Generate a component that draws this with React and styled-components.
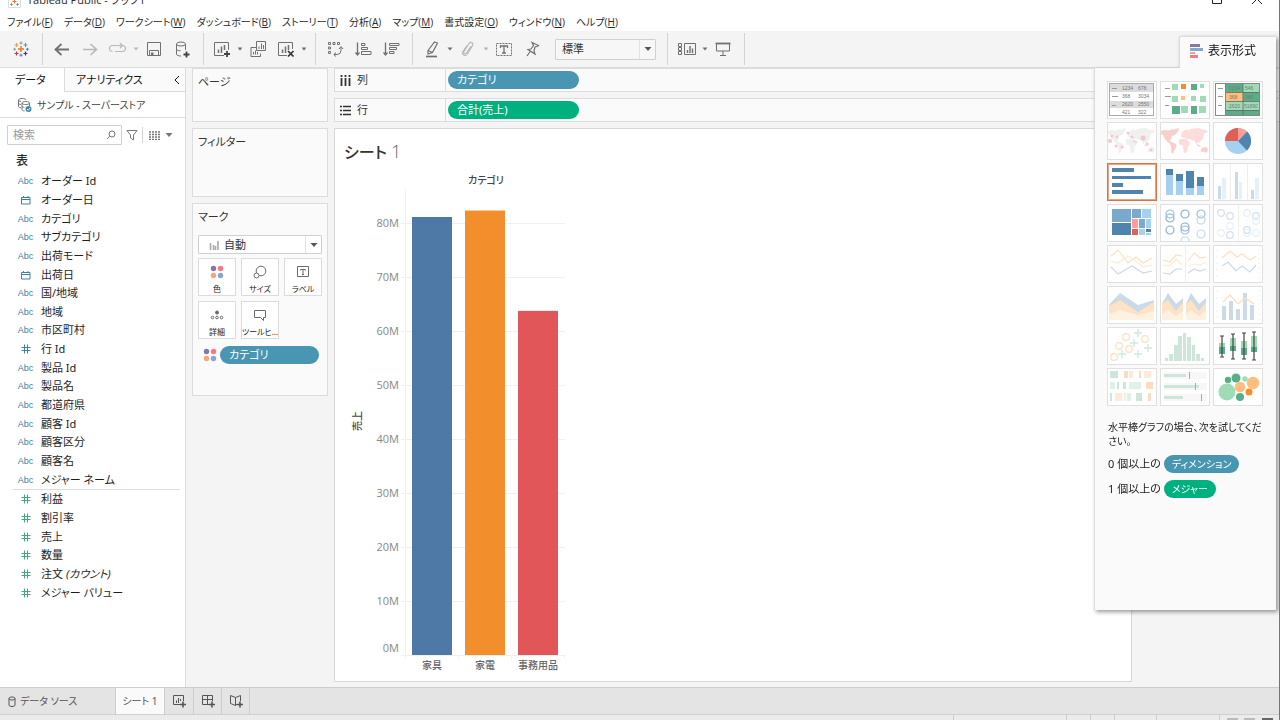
import React from 'react';
import styled, { createGlobalStyle } from 'styled-components';

const UI_FONT = '"Noto Sans", "Noto Sans CJK JP", sans-serif';
const MENU_FONT = '"Open Sans", "Noto Sans CJK JP", sans-serif';

const GlobalStyle = createGlobalStyle`
    * {
        box-sizing: border-box;
    }
    body {
        margin: 0;
        font-family: ${UI_FONT};
        font-size: 11px;
        line-height: 16px;
        color: #2b2b2b;
        font-feature-settings: "palt";
    }
    button, input, select {
        margin: 0;
        padding: 0;
        border: none;
        background: transparent;
        color: inherit;
        font: inherit;
        font-feature-settings: inherit;
    }
    svg {
        display: block;
        flex-shrink: 0;
    }
`

const Window = styled.div`
    height: 100vh;
    display: flex;
    flex-direction: column;
    overflow: hidden;
    background: #f4f4f4;
    border-right: 1px solid #757575;
    position: relative;
`

const TitleBar = styled.header`
    height: 8px;
    flex-shrink: 0;
    display: flex;
    align-items: flex-end;
    gap: 6px;
    padding: 0 16px 0 8px;
    overflow: hidden;
    background: #fff;
    font-family: ${MENU_FONT};
    font-size: 11px;
`
const WindowButton = styled.button`
    width: 12px;
    height: 12px;
    margin-left: ${({ $first }) => ($first ? 'auto' : '22px')};
    margin-bottom: 3px;
`

const MenuBar = styled.nav`
    height: 23px;
    flex-shrink: 0;
    display: flex;
    align-items: center;
    gap: 11px;
    padding: 4px 7px 0;
    background: #fff;
    font-family: ${MENU_FONT};
    font-size: 10px;
    white-space: nowrap;
`

const Toolbar = styled.div`
    height: 37px;
    flex-shrink: 0;
    display: flex;
    align-items: center;
    border-bottom: 1px solid #dcdcdc;
    color: #707070;
`
const ToolGroup = styled.div`
    height: 32px;
    display: flex;
    align-items: center;
    gap: 8px;
    padding: 0 11px 0 ${({ $pad }) => $pad || 9}px;
    border-right: 1px solid #d4d4d4;
`
const ToolButton = styled.button`
    width: 20px;
    height: 24px;
    display: flex;
    align-items: center;
    justify-content: center;
    opacity: ${({ disabled }) => (disabled ? 0.45 : 1)};
`
const CaretButton = styled(ToolButton)`
    width: 16px;
    margin: 0 -8px;
`

const SelectBox = styled.label`
    width: ${({ $wide }) => ($wide ? '124px' : '101px')};
    height: ${({ $wide }) => ($wide ? '19px' : '21px')};
    margin: ${({ $wide }) => ($wide ? '10px 0 0' : '0 0 0 5px')};
    padding-left: ${({ $wide }) => ($wide ? '10px' : '6px')};
    display: flex;
    align-items: center;
    gap: 5px;
    border: 1px solid #d0d0d0;
    border-radius: 1px;
    background: ${({ $wide }) => ($wide ? '#fff' : '#f7f7f7')};
    color: #333;
    select {
        flex: 1;
        min-width: 0;
        appearance: none;
        outline: none;
    }
    span {
        width: 16px;
        align-self: stretch;
        display: flex;
        align-items: center;
        justify-content: center;
        border-left: 1px solid #e2e2e2;
        color: #555;
    }
`

const Body = styled.main`
    flex: 1;
    min-height: 0;
    display: flex;
    gap: 6px;
`

const DataPane = styled.aside`
    width: 186px;
    flex-shrink: 0;
    background: #fff;
    border-right: 1px solid #dcdcdc;
`
const PaneTabs = styled.div`
    height: 24px;
    display: flex;
`
const PaneTab = styled.button`
    flex: ${({ $active }) => ($active ? '0 0 65px' : '1')};
    padding: 0 4px 0 ${({ $active }) => ($active ? '15px' : '11px')};
    display: flex;
    align-items: center;
    justify-content: space-between;
    border-right: ${({ $active }) => ($active ? '1px solid #dcdcdc' : 'none')};
    border-bottom: ${({ $active }) => ($active ? 'none' : '1px solid #dcdcdc')};
    background: ${({ $active }) => ($active ? '#fff' : '#fafafa')};
    color: #111;
`
const DataSource = styled.div`
    height: 26px;
    display: flex;
    align-items: center;
    gap: 5px;
    padding-left: 17px;
    border-bottom: 1px solid #dcdcdc;
    font-size: 10px;
    color: #444;
`
const SearchRow = styled.div`
    display: flex;
    align-items: center;
    gap: 1px;
    padding: 7px 7px 0;
    color: #777;
`
const SearchBox = styled.label`
    width: 115px;
    height: 20px;
    display: flex;
    align-items: center;
    padding: 0 5px;
    border: 1px solid #cfcfcf;
    border-radius: 1px;
    input {
        flex: 1;
        min-width: 0;
        outline: none;
    }
    input::placeholder {
        color: #999;
    }
`
const SmallButton = styled.button`
    height: 16px;
    padding: 0 3px;
    display: flex;
    align-items: center;
    & + & {
        border-left: 1px solid #d4d4d4;
        padding-left: 6px;
    }
`
const TableHeading = styled.h2`
    margin: 7px 0 2px 16px;
    font-size: 12px;
    line-height: 18px;
    font-weight: 500;
`
const FieldList = styled.ul`
    height: ${({ $height }) => $height}px;
    margin: 0 5px 0 13px;
    padding: 0;
    display: grid;
    grid-auto-rows: 1fr;
    list-style: none;
    border-bottom: ${({ $divided }) => ($divided ? '1px solid #dcdcdc' : 'none')};
`
const Field = styled.li`
    display: flex;
    align-items: center;
    gap: 3px;
    color: #1e1e1e;
`
const FieldType = styled.span`
    width: 25px;
    display: flex;
    justify-content: center;
    font-family: "Liberation Sans", sans-serif;
    font-size: 9px;
    color: ${({ $measure }) => ($measure ? '#3fa97f' : '#3c83a1')};
`

const CardColumn = styled.div`
    width: 136px;
    flex-shrink: 0;
    display: flex;
    flex-direction: column;
    gap: 6px;
`
const Card = styled.section`
    min-height: ${({ $height }) => $height}px;
    padding: 5px;
    border: 1px solid #dcdcdc;
    background: #fafafa;
    h3 {
        margin: 0;
        font-size: 11px;
        line-height: 16px;
        font-weight: 400;
        color: #333;
    }
`
const MarkGrid = styled.div`
    display: grid;
    grid-template-columns: repeat(3, 38px);
    gap: 5px;
    margin: 4px 0 7px;
`
const MarkButton = styled.button`
    height: 38px;
    display: flex;
    flex-direction: column;
    align-items: center;
    justify-content: flex-end;
    gap: 4px;
    border: 1px solid #dcdcdc;
    background: #fff;
    font-size: 8px;
    line-height: 12px;
    white-space: nowrap;
    color: #222;
    svg {
        color: #6a6a6a;
    }
`
const MarkRow = styled.div`
    display: flex;
    align-items: center;
    gap: 3px;
    padding: 0 3px 0 5px;
`

const Pill = styled.button`
    width: ${({ $width }) => ($width ? `${$width}px` : 'auto')};
    height: 18px;
    padding: 0 ${({ $small }) => ($small ? 8 : 9)}px;
    border-radius: 9px;
    background: ${({ $measure }) => ($measure ? '#00b180' : '#4996b2')};
    color: #fff;
    font-size: ${({ $small }) => ($small ? 10 : 11)}px;
    line-height: 18px;
    text-align: left;
    white-space: nowrap;
`

const Workspace = styled.div`
    flex: 1;
    min-width: 0;
    display: flex;
    flex-direction: column;
    gap: 6px;
    padding-bottom: 5px;
`
const Shelf = styled.div`
    height: 24px;
    flex-shrink: 0;
    display: flex;
    align-items: center;
    gap: 2px;
    border: 1px solid #dcdcdc;
    border-right: none;
    background: #fafafa;
`
const ShelfLabel = styled.span`
    width: 111px;
    align-self: stretch;
    display: flex;
    align-items: center;
    gap: 6px;
    padding-left: 5px;
    border-right: 1px solid #dcdcdc;
    color: #333;
`
const Sheet = styled.section`
    flex: 1;
    min-height: 0;
    margin-right: 147px;
    padding: 10px 9px 0;
    overflow: hidden;
    border: 1px solid #d8d8d8;
    background: #fff;
`
const SheetTitle = styled.h1`
    margin: 0 0 7px;
    font-size: 16px;
    line-height: 24px;
    font-weight: 500;
    color: #333;
    span {
        font-family: "Open Sans", sans-serif;
        font-weight: 300;
        font-size: 18px;
        color: #666;
    }
`

/* floating "show me" window, it lies over the toolbar and the sheet */
const ShowMe = styled.aside`
    position: absolute;
    top: 36px;
    right: 3px;
    width: 182px;
    filter: drop-shadow(2px 2px 2px rgba(0, 0, 0, 0.4));
`
const ShowMeTab = styled.div`
    width: 97px;
    height: 33px;
    margin: 0 0 -1px auto;
    display: flex;
    align-items: center;
    gap: 5px;
    padding: 0 0 5px 10px;
    border: 1px solid #dcdcdc;
    border-width: 1px 0 0 1px;
    background: #fafafa;
    font-size: 12px;
    color: #111;
`
const ShowMeBody = styled.div`
    min-height: 542px;
    padding: 13px 11px 12px 12px;
    border-left: 1px solid #dcdcdc;
    background: #fafafa;
`
const ThumbGrid = styled.div`
    display: grid;
    grid-template-columns: repeat(3, 50px);
    gap: 3px;
    margin-bottom: 14px;
`
const Thumb = styled.button`
    height: 38px;
    border: 1px solid ${({ $selected }) => ($selected ? '#dc7440' : '#e0e0e0')};
    box-shadow: ${({ $selected }) => ($selected ? 'inset 0 0 0 1px #e9a380' : 'none')};
    background: #fff;
    overflow: hidden;
`
const Hint = styled.p`
    margin: 0 0 7px 1px;
    font-size: 10px;
    line-height: 14px;
    white-space: nowrap;
    color: #222;
`
const HintRow = styled.div`
    display: flex;
    align-items: center;
    gap: 3px;
    margin: 0 0 7px 1px;
    color: #222;
`

const SheetTabs = styled.footer`
    height: 27px;
    flex-shrink: 0;
    display: flex;
    border-top: 1px solid #cdcdcd;
    background: #e4e4e4;
`
const SheetTab = styled.button`
    width: ${({ $width }) => $width}px;
    display: flex;
    align-items: center;
    justify-content: ${({ $start }) => ($start ? 'flex-start' : 'center')};
    gap: 4px;
    padding-left: ${({ $start }) => ($start ? '8px' : '0')};
    border-right: 1px solid #cdcdcd;
    background: ${({ $active }) => ($active ? '#fafafa' : 'transparent')};
    font-size: 10px;
    color: #555;
`
const StatusBar = styled.div`
    height: 6px;
    flex-shrink: 0;
    display: flex;
    justify-content: flex-end;
    border-top: 1px solid #d0d0d0;
    background: #ebebeb;
`
const StatusCell = styled.span`
    width: ${({ $width }) => $width}px;
    border-left: 1px solid #cdcdcd;
    display: flex;
    align-items: flex-end;
    justify-content: space-evenly;
    i {
        width: 11px;
        height: 2px;
        background: #bbb;
    }
    i:last-child {
        background: #666;
    }
`

const Svg = ({ w = 20, h = 20, children, ...rest }) => (
    <svg width={w} height={h} viewBox={`0 0 ${w} ${h}`} fill="none" stroke="currentColor" aria-hidden="true" {...rest}>
        {children}
    </svg>
)

const Caret = ({ big }) => (
    <Svg w={8} h={6} stroke="none">
        <path d={big ? 'M0.5 1h7L4 5z' : 'M1.5 1.5h5L4 4.5z'} fill="currentColor" />
    </Svg>
)

const Plus = ({ x, y, r = 3, color = '#444', width = 1.6 }) => (
    <path d={`M${x - r} ${y}h${2 * r}M${x} ${y - r}v${2 * r}`} stroke={color} strokeWidth={width} />
)

const Logo = () => (
    <Svg>
        <Plus x={10} y={10} r={3} color="#e8762c" width={1.4} />
        <Plus x={5.5} y={6} r={2} color="#ed9a4a" width={1.1} />
        <Plus x={14.5} y={6} r={2} color="#5b9aa8" width={1.1} />
        <Plus x={5.5} y={14.5} r={2} color="#c9344e" width={1.2} />
        <Plus x={14.5} y={14.5} r={2} color="#1f457e" width={1.2} />
        <Plus x={10} y={4} r={1.6} color="#7799a6" width={0.9} />
        <Plus x={10} y={16.2} r={1.6} color="#5c6692" width={0.9} />
        <Plus x={3.6} y={10.2} r={1.4} color="#7099a6" width={0.9} />
        <Plus x={16.4} y={10.2} r={1.4} color="#5c6692" width={0.9} />
    </Svg>
)

const BackIcon = () => <Svg><path d="M17 10.5H3.5M9.5 5L3.5 10.5l6 5.5" strokeWidth="1.8" /></Svg>
const ForwardIcon = () => <Svg><path d="M3 10.5h13.5M10.5 5l6 5.500-6 5.500" strokeWidth="1.6" /></Svg>
const ReplayIcon = () => (
    <Svg><path d="M4.500 12.500a3 3 0 0 1 0-6h9M14.500 6.500a3 3 0 0 1 0 6H7M12 4l2.500 2.500L12 9" strokeWidth="1.200" /></Svg>
)
const SaveIcon = () => (
    <Svg>
        <path d="M3.500 3.500h13v13h-13zM5.500 16.500v-5h9v5" />
        <path d="M7 13.500h2.500v3H7z" fill="currentColor" stroke="none" />
    </Svg>
)
const AddDataIcon = () => (
    <Svg>
        <ellipse cx="9" cy="5" rx="4.500" ry="2" />
        <path d="M4.500 5v10c0 1.300 2 2 4.500 2M13.500 5v6M4.500 10c0 1 1.500 1.700 4 1.800" />
        <Plus x={14.500} y={15.500} width={1.800} />
    </Svg>
)
const NewSheetIcon = () => (
    <Svg>
        <path d="M12 16.500H2.500v-13h14V11" />
        <path d="M6.500 14v-3.500M9.500 14V7.500M12.500 11V6" strokeWidth="1.500" />
        <Plus x={15} y={15} width={1.800} />
    </Svg>
)
const DuplicateIcon = () => (
    <Svg>
        <path d="M8.500 2.500h9v9h-9zM8.500 8.500H3v9h9.500v-3" />
        <path d="M11 10V7.500M13.500 10V4.500M15.500 10V6M5.500 15.500V13M7.500 15.500v-4M9.500 15.500V13" />
    </Svg>
)
const ClearIcon = () => (
    <Svg>
        <path d="M11 16.500H2.500v-13h14V10" />
        <path d="M6.500 14v-3.500M9.500 14V7.500M12.500 11V6" strokeWidth="1.500" />
        <path d="M12 12l5.500 5.500M17.500 12L12 17.500" stroke="#333" strokeWidth="1.700" />
    </Svg>
)
const SwapIcon = () => (
    <Svg>
        <path d="M3.500 3.500h2v2h-2zM8 3.500h2v2H8zM12.500 3.500h2v2h-2zM3.500 8h2v2h-2zM3.500 12.500h2v2h-2z" />
        <path d="M16 8.500v3a4 4 0 0 1-4 4H9M14 10l2-2.500 2 2.500M11 13.500L8.800 15.500l2.200 2" />
    </Svg>
)
const SortIcon = ({ desc }) => (
    <Svg>
        <path d="M4.500 3.500v12.500M2.500 13.500l2 2.500 2-2.500" strokeWidth="1.300" />
        {desc
            ? <path d="M8.500 4.500h9.500v2H8.500zM8.500 8.500h7v2h-7zM8.500 12.500h4.500v2H8.500z" />
            : <path d="M8.500 4.500h3.500v2H8.500zM8.500 8.500h6v2h-6zM8.500 12.500h9.500v3H8.500z" />}
    </Svg>
)
const HighlightIcon = () => (
    <Svg>
        <path d="M6 11.500L12.500 3l3 1-5 9.500-4.500 1.500zM6 11.500l4.500 2" strokeWidth="1.200" />
        <path d="M4 17.500h11" strokeWidth="1.700" />
    </Svg>
)
const ClipIcon = () => (
    <Svg><path d="M13 7l-4.500 7c-1.200 1.800-3.500.4-2.500-1.500l5-8c1.500-2.300 5-.5 3.500 2.200l-5.300 8.600c-1.800 2.600-6 .3-4.300-2.800L9 6.500" strokeWidth="1.100" /></Svg>
)
const LabelIcon = () => (
    <Svg>
        <path d="M2.500 4.500h15v12h-15z" strokeDasharray="2 1" />
        <path d="M6.500 9v-2h7v2M10 7v7M8 14h4" strokeWidth="1.300" />
    </Svg>
)
const PinIcon = () => (
    <Svg><path d="M10 3.500l6.500 3-1.500 1-2 .5-1 4 1 3-7-4.500 3-.5 2.500-3.500zM8.500 12L5 17" strokeWidth="1.200" /></Svg>
)
const CardsIcon = () => (
    <Svg>
        <path d="M1.500 4.500h3v3h-3zM1.500 8.500h3v3h-3zM1.500 12.500h3v3h-3zM7.500 4.500h11v11h-11z" />
        <path d="M10.500 14v-3M13 14V7M15.500 14V9.500" strokeWidth="1.400" />
    </Svg>
)
const PresentIcon = () => (
    <Svg>
        <path d="M3.500 4.500v7.500h13V4.500M10 12v4M7 16.500h6" />
        <path d="M2.500 4.500h15" strokeWidth="1.800" />
    </Svg>
)

const ColorDots = () => (
    <Svg w={14} h={14} stroke="none">
        <circle cx="3.500" cy="3.500" r="2.700" fill="#8a76a4" />
        <circle cx="10.500" cy="3.500" r="2.700" fill="#f47a87" />
        <circle cx="3.500" cy="10.500" r="2.700" fill="#f4a67c" />
        <circle cx="10.500" cy="10.500" r="2.700" fill="#83a6d2" />
    </Svg>
)
const SizeIcon = () => (
    <Svg w={14} h={14}>
        <circle cx="8" cy="6" r="4.800" />
        <circle cx="3.500" cy="10.500" r="2.500" fill="#fff" />
    </Svg>
)
const TextIcon = () => (
    <Svg w={14} h={14}>
        <path d="M1.500 1.500h11v10h-11zM4.500 5.500V4.500h5v1M7 4.500v5M6 9.500h2" />
    </Svg>
)
const DetailIcon = () => (
    <Svg w={14} h={14}>
        <circle cx="7" cy="4.500" r="1.500" fill="currentColor" />
        <circle cx="2.500" cy="9.500" r="1.300" />
        <circle cx="7" cy="9.500" r="1.300" />
        <circle cx="11.500" cy="9.500" r="1.300" />
    </Svg>
)
const TooltipIcon = () => <Svg w={14} h={14}><path d="M1.500 2.500h11v7h-2v3l-3-3h-6z" /></Svg>

const CalendarIcon = () => (
    <Svg w={10} h={10}><path d="M0.500 2.500h8.500v6.500h-8.500zM0.500 4.500H9M2.500 1v1.500M7 1v1.500" /></Svg>
)
const HashIcon = () => <Svg w={10} h={10}><path d="M3.500 0.500v9M6.500 0.500v9M0.500 3.500h9M0.500 6.500h9" /></Svg>

const DatabaseIcon = () => (
    <Svg w={15} h={16} stroke="#777">
        <path d="M1.500 3v6.500c0 .8 1 1.200 2.500 1.400M1.500 3c0-2 7.500-2 7.500 0M1.500 3c0 1 1 1.300 2.500 1.400M1.500 6.300c0 .7 1 1 2.500 1.200" />
        <path d="M5 6v6.500c0 .8 1 1.300 2.500 1.400M5 6c0-2 7.500-2 7.500 0s-7.500 2-7.500 0M12.500 6v3M5 9.300c0 .7 1 1 2.500 1.100" />
        <circle cx="11.500" cy="12" r="3" fill="#3f8aab" stroke="none" />
        <path d="M10 12l1.200 1.200 2-2.200" stroke="#fff" strokeWidth="0.900" />
    </Svg>
)

const poly = (points, color, width = 1.200) => (
    <polyline points={points} fill="none" stroke={color} strokeWidth={width} />
)
const block = (list, color) => list.map(([x, y, w, h]) => (
    <rect key={`${x}-${y}`} x={x} y={y} width={w} height={h} fill={color} />
))
const ring = (list, color, r = 4) => list.map(([x, y]) => (
    <circle key={`${x}-${y}`} cx={x} cy={y} r={r} fill="none" stroke={color} strokeWidth="1.200" />
))
const tiny = (list) => list.map(([x, y, label]) => (
    <text key={`${x}-${y}`} x={x} y={y} fontSize="5" fill="#777" fontFamily="Liberation Sans, sans-serif">{label}</text>
))

const World = ({ west, east }) => (
    <g>
        <path fill={west} d="M1 9l3-1 5 .5 4-1.500 2 1 2 3-2 2-3 1-1 3 -1 2 3 1.500 3 1.500 .5 2.500-2 4-1.500 3-1.500-.5-.5-7-2-3-2-1.500-3-4-1-3-3 .5zM15 7l4-1-1 4-2 1.500z" />
        <path fill={east} d="M21 15l0-3 2-3 3-1.500 3 .5 4-1.500 6-.5 3 1.500 5 1 .5 2-3 .5-1 2.500-1 4-2 1.500-1 2-2-1-1 2.500-2-4-3-.5-2-1-2 .5-2-1zM20 17l5 0 3 1.500 2 3.500-2 2.500-1 5-2 2-1.500-2-.5-6-3.500-1-1-3z" />
        <path fill={west} d="M41 27l3-2 3 .5 1 3-2 2.500-2-1.500-3 .5zM37 22l4 2-1 1-3-1.500z" />
    </g>
)

const thumbs = [
    { id: 'テキスト表', art: (
        <>
            <rect x="2.500" y="2.500" width="44" height="32" fill="#fff" stroke="#aaa" />
            {block([[3, 3, 43, 8], [3, 20, 43, 7]], '#dcdcdc')}
            {block([[5, 7, 5, 1], [5, 15, 6, 1], [5, 24, 4, 1]], '#999')}
            {tiny([[15, 9, '1234'], [31, 9, '678'], [15, 17, '368'], [31, 17, '3034'], [15, 25, '2620'], [31, 25, '2550'], [15, 33, '421'], [31, 33, '322']])}
        </>
    ) },
    { id: 'ヒート マップ', art: (
        <>
            {block([[5, 7, 5, 1], [5, 15, 6, 1], [5, 24, 4, 1]], '#999')}
            {block([[12, 3, 6, 6], [40, 3, 4, 4], [12, 15, 6, 6], [31, 15, 5, 5], [40, 15, 6, 6], [21, 25, 7, 7], [39, 25, 7, 7]], '#9fdcb5')}
            {block([[31, 3, 6, 6], [12, 25, 8, 8], [31, 25, 6, 8]], '#57ae87')}
            {block([[21, 3, 5, 5]], '#f28e2b')}
            {block([[21, 15, 4, 4]], '#ffbe7d')}
        </>
    ) },
    { id: 'ハイライト表', art: (
        <>
            <rect x="2.500" y="2.500" width="44" height="32" fill="#fff" stroke="#888" />
            {block([[13, 3, 17, 8], [30, 11, 16, 9], [13, 29, 17, 5], [30, 29, 16, 5]], '#57ae87')}
            {block([[30, 3, 16, 8], [13, 20, 17, 9], [30, 20, 16, 9]], '#9fdcb5')}
            {block([[13, 11, 17, 9]], '#ffbe7d')}
            {block([[5, 7, 5, 1], [5, 15, 5, 1], [5, 24, 4, 1]], '#999')}
            <path d="M12.500 3v31M30 3v31M13 11.500h33M13 20.500h33M13 29.500h33" stroke="#666" strokeWidth="0.800" />
            {tiny([[16, 9, '1234'], [32, 9, '546'], [16, 18, '368'], [32, 18, '380'], [16, 27, '2620'], [31, 27, '51890']])}
        </>
    ) },
    { id: '記号マップ', art: (
        <>
            <World west="#f0f0f0" east="#f0f0f0" />
            {[[3, 19, 2], [5, 14, 1.500], [10, 15, 1.500], [9, 24, 1.500], [15, 25, 1.500], [21, 11, 1.500], [25, 15, 1.500], [27, 19, 1], [36, 16, 2.500], [40, 22, 1.500], [44, 28, 1.500], [29, 20, 1]].map(([x, y, r]) => (
                <circle key={`${x}-${y}`} cx={x} cy={y} r={r} fill="#f5c6ca" />
            ))}
        </>
    ) },
    { id: 'マップ', art: <World west="#f8cfcb" east="#fddcdb" /> },
    { id: '円グラフ', art: (
        <>
            <circle cx="25" cy="19" r="13" fill="#a5d0f0" />
            <path d="M25 19L34 9.600A13 13 0 0 1 34 28.400z" fill="#4f84ae" />
            <path d="M25 19V6a13 13 0 0 1 9 3.600z" fill="#ff9d9a" />
            <path d="M25 19V6a13 13 0 0 0-13 13z" fill="#e15f57" />
        </>
    ) },
    { id: '水平棒', selected: true, art: block([[5, 5, 22, 4], [5, 13, 39, 3], [5, 20, 11, 4], [5, 27, 31, 4]], '#4f84ae') },
    { id: '積み上げ棒', art: (
        <>
            {block([[6, 12, 7, 20], [16, 18, 7, 14], [26, 25, 8, 7], [37, 23, 7, 9]], '#a5d0f0')}
            {block([[6, 6, 7, 6], [16, 11, 7, 7], [26, 8, 8, 17], [37, 14, 7, 9]], '#4f84ae')}
        </>
    ) },
    { id: '並列棒', art: (
        <>
            <path d="M17.500 1v36M34.500 1v36" stroke="#eee" />
            {block([[5, 23, 3, 13], [22, 9, 3, 27], [38, 27, 3, 9]], '#cbdae6')}
            {block([[9, 15, 4, 21], [26, 19, 3, 17], [42, 15, 4, 21]], '#e4f1fb')}
        </>
    ) },
    { id: 'ツリーマップ', art: (
        <>
            {block([[5, 5, 19, 13], [25, 5, 9, 9], [32, 15, 6, 9]], '#7ba9ce')}
            {block([[5, 19, 19, 12], [39, 25, 5, 3]], '#4f84ae')}
            {block([[35, 5, 9, 9], [39, 15, 5, 9], [32, 25, 6, 6], [39, 29, 5, 2]], '#a5d0f0')}
            {block([[25, 15, 6, 9]], '#ff9d9a')}
            {block([[25, 25, 6, 6]], '#e15f57')}
        </>
    ) },
    { id: '円ビュー', art: (
        <>
            {ring([[10, 14], [10, 26], [25, 10], [25, 23]], '#88add0')}
            {ring([[10, 10], [41, 10], [25, 26]], '#9abddb')}
            {ring([[41, 16], [41, 30], [25, 37]], '#b9dbf3')}
        </>
    ) },
    { id: '並列円', art: (
        <>
            <path d="M25.500 1v36" stroke="#eee" />
            {ring([[8, 9], [17, 12], [17, 31], [43, 12], [34, 26]], '#d3e0ec', 3.300)}
            {ring([[17, 22], [8, 29], [34, 9], [43, 17], [34, 29], [43, 29]], '#e4f1fb', 3.300)}
        </>
    ) },
    { id: '線 (連続)', art: (
        <>
            {poly('4,11 11,5 21,18 29,12 36,18 45,13', '#fde0c2')}
            {poly('4,16 11,18 21,11 29,16 36,22 45,20', '#fdecd0')}
            {poly('4,22 11,29 25,21 36,28 45,26', '#cbdae6')}
        </>
    ) },
    { id: '線 (不連続)', art: (
        <>
            <path d="M25.500 1v36" stroke="#eee" />
            {poly('3,15 10,17 16,10 22,11', '#fde0c2')}
            {poly('3,20 10,21 16,14 22,20', '#fdecd0')}
            {poly('3,28 10,29 16,24 22,24', '#cbdae6')}
            {poly('28,16 34,8 40,13 46,12', '#fde0c2')}
            {poly('28,21 34,19 40,20 46,17', '#fdecd0')}
            {poly('28,28 34,24 40,26 46,24', '#cbdae6')}
        </>
    ) },
    { id: '二重線', art: (
        <>
            {poly('9,13 17,6 24,12 29,9 37,15 43,11', '#fde0c2')}
            {poly('9,21 15,17 23,26 29,21 37,27 43,20', '#cbdae6')}
            <path d="M3 5h2M3 12h2M3 18h2M3 25h2M3 31h2M45 5h2M45 9h2M45 14h2M45 18h2M45 23h2M45 28h2M45 33h2" stroke="#eee" />
        </>
    ) },
    { id: 'エリア (連続)', art: (
        <>
            <path d="M2 19L13 7l18 12 16-5v12H2z" fill="#cbdae6" />
            <path d="M2 20L13 14l18 12 16-10v18H2z" fill="#fde2c6" />
            <path d="M2 28L13 24l18 5 16-4v9H2z" fill="#fef1e2" />
        </>
    ) },
    { id: 'エリア (不連続)', art: (
        <>
            <path d="M2 18L8 7l8 11 7-6v22H2zM26 18l5-11 8 11 7-6v22H26z" fill="#cbdae6" />
            <path d="M2 18l6-4 8 11 7-9v18H2zM26 18l5-4 8 11 7-9v18H26z" fill="#fde2c6" />
            <path d="M2 28l6-4 8 6 7-5v9H2zM26 28l5-4 8 6 7-5v9H26z" fill="#fef1e2" />
        </>
    ) },
    { id: '二重組み合わせ', art: (
        <>
            {block([[9, 20, 4, 14], [16, 15, 4, 19], [23, 23, 4, 11], [30, 7, 4, 27], [37, 19, 4, 15]], '#cbdae6')}
            {poly('10,16 17,9 25,18 32,12 41,18', '#fddcba')}
            <path d="M3 5h2M3 12h2M3 18h2M3 25h2M3 31h2M45 5h2M45 9h2M45 14h2M45 18h2M45 23h2M45 28h2M45 33h2" stroke="#eee" />
        </>
    ) },
    { id: '散布図', art: (
        <>
            {ring([[7, 30], [12, 19], [19, 10], [22, 22], [38, 12]], '#fde0c2', 3.300)}
            {[[15, 27], [27, 16], [31, 6], [31, 27], [41, 21]].map(([x, y]) => (
                <Plus key={x * y} x={x} y={y} r={4} color="#cfe8dc" width={1.300} />
            ))}
        </>
    ) },
    { id: 'ヒストグラム', art: block([[5, 31, 3, 3], [9, 27, 4, 7], [14, 18, 4, 16], [18, 9, 4, 25], [23, 6, 3, 28], [27, 10, 4, 24], [32, 18, 3, 16], [36, 27, 4, 7], [41, 31, 3, 3]], '#cde6da') },
    { id: '箱ヒゲ図', art: (
        <>
            {block([[6, 16, 6, 5], [17, 11, 6, 8], [28, 14, 6, 7], [38, 9, 6, 12]], '#9fdcb5')}
            {block([[6, 20, 6, 7], [17, 19, 6, 5], [28, 21, 6, 7], [38, 20, 6, 5]], '#57ae87')}
            <path d="M9 9v21M20 7v25M31 6v26M41 5v28M7 9h4M7 30h4M18 7h4M18 32h4M29 6h4M29 32h4M39 5h4M39 33h4" stroke="#444" strokeWidth="1.200" />
        </>
    ) },
    { id: 'ガント', art: (
        <>
            {block([[3, 3, 8, 7], [10, 14, 2, 7], [3, 25, 2, 8], [29, 25, 6, 8], [16, 14, 3, 7]], '#cde6da')}
            {block([[3, 14, 5, 7], [22, 14, 12, 7], [20, 25, 4, 8]], '#dff2e7')}
            {block([[17, 3, 4, 7], [32, 3, 2, 7], [39, 14, 7, 7], [41, 25, 3, 8]], '#fcdcc0')}
            {block([[22, 3, 4, 7], [37, 3, 7, 7], [8, 25, 7, 8], [17, 25, 2, 8]], '#fdeadb')}
        </>
    ) },
    { id: 'ブレット グラフ', art: (
        <>
            {block([[4, 4, 43, 7], [4, 15, 43, 7], [4, 26, 43, 7]], '#f7f7f7')}
            {block([[4, 6, 22, 3], [4, 17, 35, 3], [4, 28, 19, 3]], '#cde6da')}
            {block([[29, 4, 1, 7], [35, 15, 1, 7], [41, 26, 1, 7]], '#aaa')}
        </>
    ) },
    { id: 'パック バブル', art: (
        <g>
            <circle cx="14" cy="24" r="8.500" fill="#9fdcb5" />
            <circle cx="32" cy="11" r="2.700" fill="#9fdcb5" />
            <circle cx="23" cy="10" r="4.500" fill="#57ae87" />
            <circle cx="15" cy="12" r="3.200" fill="#57ae87" />
            <circle cx="27" cy="29" r="4" fill="#57ae87" />
            <circle cx="40" cy="15" r="6.200" fill="#ffbe7d" />
            <circle cx="27" cy="19" r="5.300" fill="#ffbe7d" />
            <circle cx="36" cy="24" r="3.500" fill="#f28e2b" />
        </g>
    ) },
]

const menus = [
    ['ファイル', 'F'], ['データ', 'D'], ['ワークシート', 'W'], ['ダッシュボード', 'B'], ['ストーリー', 'T'],
    ['分析', 'A'], ['マップ', 'M'], ['書式設定', 'O'], ['ウィンドウ', 'N'], ['ヘルプ', 'H'],
]

const dimensions = [
    ['abc', 'オーダー Id'], ['date', 'オーダー日'], ['abc', 'カテゴリ'], ['abc', 'サブカテゴリ'],
    ['abc', '出荷モード'], ['date', '出荷日'], ['abc', '国/地域'], ['abc', '地域'], ['abc', '市区町村'],
    ['num', '行 Id'], ['abc', '製品 Id'], ['abc', '製品名'], ['abc', '都道府県'], ['abc', '顧客 Id'],
    ['abc', '顧客区分'], ['abc', '顧客名'], ['abc', 'メジャー ネーム'],
]
const measures = ['利益', '割引率', '売上', '数量', '注文 (カウント)', 'メジャー バリュー']

const sales = [
    { name: '家具', value: 81.200, color: '#4e79a7' },
    { name: '家電', value: 82.400, color: '#f28e2b' },
    { name: '事務用品', value: 63.800, color: '#e15759' },
]

const BASE = 484
const LEFT = 61
const COLUMN = 53
const scaleY = (value) => BASE - value * 5.394

const SalesChart = () => (
    <svg width="230" height="510" role="img" aria-label="カテゴリ別の売上">
        <text x="142" y="13" textAnchor="middle" fontSize="10" fontWeight="500" fill="#444">カテゴリ</text>
        <text transform="rotate(-90 13 250)" x="13" y="254" textAnchor="middle" fontSize="10" fontWeight="500" fill="#444">売上</text>
        <g shapeRendering="crispEdges" stroke="#f0f0f0">
            <path d={`M${LEFT + 0.5} 18V${BASE + 3}`} />
            <path d={`M${LEFT - 4} ${BASE + 0.5}H221`} />
            {[1, 2, 3].map(n => <path key={n} d={`M${LEFT + n * COLUMN + 0.5} ${BASE}v4`} />)}
            {[1, 2, 3, 4, 5, 6, 7, 8].map(n => (
                <path key={n} d={`M${LEFT - 4} ${Math.round(scaleY(n * 10)) + 0.5}H221`} />
            ))}
        </g>
        {[0, 1, 2, 3, 4, 5, 6, 7, 8].map(n => (
            <text
                key={n}
                x="55"
                y={n === 0 ? BASE - 3 : Math.round(scaleY(n * 10)) + 4}
                textAnchor="end"
                fontFamily="Open Sans, sans-serif"
                fontSize="11"
                fill="#888"
            >
                {n * 10}M
            </text>
        ))}
        {sales.map((item, i) => (
            <g key={item.name}>
                <rect
                    x={LEFT + i * COLUMN + 7}
                    y={scaleY(item.value)}
                    width="40"
                    height={BASE - scaleY(item.value)}
                    fill={item.color}
                />
                <text x={LEFT + i * COLUMN + 27} y={BASE + 14} textAnchor="middle" fontSize="10" fontWeight="500" fill="#666">
                    {item.name}
                </text>
            </g>
        ))}
    </svg>
)

const FieldIcon = ({ type }) => {
    if (type === 'date') {
        return <CalendarIcon />
    }
    if (type === 'num') {
        return <HashIcon />
    }
    return 'Abc'
}

const Tool = ({ label, caret, disabled, children }) => (
    <>
        <ToolButton aria-label={label} disabled={disabled}>{children}</ToolButton>
        {caret && <CaretButton aria-label={`${label}のオプション`} disabled={disabled}><Caret /></CaretButton>}
    </>
)

const App = () => {
    return (
        <Window>
            <GlobalStyle />
            <TitleBar>
                <Svg w={13} h={13}>
                    <rect x="0.500" y="0.500" width="12" height="12" stroke="#ddd" />
                    <Plus x={6.500} y={6.500} r={2} color="#e8762c" width={1} />
                    <Plus x={3.500} y={9.500} r={1.200} color="#5c88b2" width={1} />
                    <Plus x={9.500} y={9.500} r={1.200} color="#5c88b2" width={1} />
                </Svg>
                Tableau Public - ブック1
                <WindowButton $first aria-label="最大化">
                    <Svg w={12} h={12}><path d="M1.500 1.500h9v9h-9z" stroke="#222" /></Svg>
                </WindowButton>
                <WindowButton aria-label="閉じる">
                    <Svg w={12} h={12}><path d="M1 1l10 10M11 1L1 11" stroke="#222" /></Svg>
                </WindowButton>
            </TitleBar>
            <MenuBar>
                {menus.map(([name, key]) => (
                    <button key={key}>{name}(<u>{key}</u>)</button>
                ))}
            </MenuBar>
            <Toolbar>
                <ToolGroup $pad={11}>
                    <Tool label="スタート ページ"><Logo /></Tool>
                </ToolGroup>
                <ToolGroup>
                    <Tool label="元に戻す"><BackIcon /></Tool>
                    <Tool label="やり直す" disabled><ForwardIcon /></Tool>
                    <Tool label="再生" caret disabled><ReplayIcon /></Tool>
                    <Tool label="保存"><SaveIcon /></Tool>
                    <Tool label="新しいデータ ソース"><AddDataIcon /></Tool>
                </ToolGroup>
                <ToolGroup $pad={8}>
                    <Tool label="新しいワークシート" caret><NewSheetIcon /></Tool>
                    <Tool label="複製"><DuplicateIcon /></Tool>
                    <Tool label="クリア" caret><ClearIcon /></Tool>
                </ToolGroup>
                <ToolGroup>
                    <Tool label="行と列の交換"><SwapIcon /></Tool>
                    <Tool label="昇順"><SortIcon /></Tool>
                    <Tool label="降順"><SortIcon desc /></Tool>
                </ToolGroup>
                <ToolGroup>
                    <Tool label="ハイライト" caret><HighlightIcon /></Tool>
                    <Tool label="グループ" caret disabled><ClipIcon /></Tool>
                    <Tool label="マーク ラベル"><LabelIcon /></Tool>
                    <Tool label="軸の固定"><PinIcon /></Tool>
                    <SelectBox>
                        <select aria-label="適合" defaultValue="標準">
                            <option>標準</option>
                        </select>
                        <span><Caret big /></span>
                    </SelectBox>
                </ToolGroup>
                <ToolGroup>
                    <Tool label="カードの表示" caret><CardsIcon /></Tool>
                    <Tool label="プレゼンテーション"><PresentIcon /></Tool>
                </ToolGroup>
            </Toolbar>

            <Body>
                <DataPane>
                    <PaneTabs>
                        <PaneTab $active>データ</PaneTab>
                        <PaneTab>
                            アナリティクス
                            <Svg w={8} h={10}><path d="M6 1L2 5l4 4" /></Svg>
                        </PaneTab>
                    </PaneTabs>
                    <DataSource><DatabaseIcon />サンプル - スーパーストア</DataSource>
                    <SearchRow>
                        <SearchBox>
                            <input aria-label="検索" placeholder="検索" />
                            <Svg w={10} h={10}>
                                <circle cx="6" cy="4" r="3" />
                                <path d="M3.800 6.200L1 9" />
                            </Svg>
                        </SearchBox>
                        <SmallButton aria-label="フィルター">
                            <Svg w={12} h={12}><path d="M1 1.500h10L7.500 6v5l-3-2V6z" /></Svg>
                        </SmallButton>
                        <SmallButton aria-label="表示">
                            <Svg w={12} h={9} strokeWidth="1.300">
                                <path d="M0 1h12M0 3.500h12M0 6h12M0 8.500h12" strokeDasharray="2 1" />
                            </Svg>
                        </SmallButton>
                        <Caret big />
                    </SearchRow>
                    <TableHeading>表</TableHeading>
                    <FieldList $height={318} $divided>
                        {dimensions.map(([type, name]) => (
                            <Field key={name}><FieldType><FieldIcon type={type} /></FieldType>{name}</Field>
                        ))}
                    </FieldList>
                    <FieldList $height={112}>
                        {measures.map(name => (
                            <Field key={name}><FieldType $measure><HashIcon /></FieldType>
                                {name === '注文 (カウント)' ? <span>注文 <i>(カウント)</i></span> : name}
                            </Field>
                        ))}
                    </FieldList>
                </DataPane>

                <CardColumn>
                    <Card $height={54}><h3>ページ</h3></Card>
                    <Card $height={69}><h3>フィルター</h3></Card>
                    <Card $height={193}>
                        <h3>マーク</h3>
                        <SelectBox $wide>
                            <Svg w={10} h={10} stroke="#aaa"><path d="M1.500 3v7M4.500 5v5M6.500 6v4M9 1v9" strokeWidth="1.600" /></Svg>
                            <select aria-label="マーク タイプ" defaultValue="自動">
                                <option>自動</option>
                            </select>
                            <span><Caret big /></span>
                        </SelectBox>
                        <MarkGrid>
                            <MarkButton><ColorDots />色</MarkButton>
                            <MarkButton><SizeIcon />サイズ</MarkButton>
                            <MarkButton><TextIcon />ラベル</MarkButton>
                            <MarkButton><DetailIcon />詳細</MarkButton>
                            <MarkButton><TooltipIcon />ツールヒ…</MarkButton>
                        </MarkGrid>
                        <MarkRow><ColorDots /><Pill $width={99}>カテゴリ</Pill></MarkRow>
                    </Card>
                </CardColumn>

                <Workspace>
                    <Shelf>
                        <ShelfLabel>
                            <Svg w={11} h={11} strokeWidth="1.800">
                                <path d="M1.500 0v2M1.500 3v8M5.500 0v2M5.500 3v8M9.500 0v2M9.500 3v8" />
                            </Svg>
                            列
                        </ShelfLabel>
                        <Pill $width={131}>カテゴリ</Pill>
                    </Shelf>
                    <Shelf>
                        <ShelfLabel>
                            <Svg w={11} h={11} strokeWidth="1.600">
                                <path d="M0 1.500h2M3 1.500h8M0 5.500h2M3 5.500h8M0 9.500h2M3 9.500h8" />
                            </Svg>
                            行
                        </ShelfLabel>
                        <Pill $width={131} $measure>合計(売上)</Pill>
                    </Shelf>
                    <Sheet>
                        <SheetTitle>シート <span>1</span></SheetTitle>
                        <SalesChart />
                    </Sheet>
                </Workspace>
            </Body>

            <SheetTabs>
                <SheetTab $width={116} $start>
                    <Svg w={8} h={11}><path d="M1 2.500v6.500c0 2 6 2 6 0V2.500c0-2-6-2-6 0s6 2 6 0" /></Svg>
                    データ ソース
                </SheetTab>
                <SheetTab $width={49} $active>シート 1</SheetTab>
                <SheetTab $width={29} aria-label="新しいワークシート">
                    <Svg w={14} h={14}><path d="M8 10.500H1.500v-9h10V7M4.500 9V6.500M6.500 9V4M8.500 7V5" /><Plus x={11} y={10.500} color="#555" /></Svg>
                </SheetTab>
                <SheetTab $width={28} aria-label="新しいダッシュボード">
                    <Svg w={14} h={14}><path d="M8 10.500H1.500v-9h10V7M6.500 1.500v9M1.500 5.500h10" /><Plus x={11} y={10.500} color="#555" /></Svg>
                </SheetTab>
                <SheetTab $width={28} aria-label="新しいストーリー">
                    <Svg w={14} h={14}><path d="M8 10l-1.500 1.500-5-2v-8l5 2 5-2V7M6.500 3.500v8" /><Plus x={11} y={10.500} color="#555" /></Svg>
                </SheetTab>
            </SheetTabs>
            <StatusBar>
                <StatusCell $width={113} />
                <StatusCell $width={24} />
                <StatusCell $width={24} />
                <StatusCell $width={42} />
                <StatusCell $width={63} />
                <StatusCell $width={60}><i /><i /><i /></StatusCell>
            </StatusBar>

            <ShowMe>
                <ShowMeTab>
                    <Svg w={13} h={14} stroke="none">
                        <rect x="0" y="0" width="10" height="3" fill="#8a76a4" />
                        <rect x="0" y="4" width="13" height="3" fill="#83a6d2" />
                        <rect x="0" y="8" width="5" height="2" fill="#f4a67c" />
                        <rect x="0" y="11" width="8" height="3" fill="#f47a87" />
                    </Svg>
                    表示形式
                </ShowMeTab>
                <ShowMeBody>
                    <ThumbGrid>
                        {thumbs.map(thumb => (
                            <Thumb key={thumb.id} $selected={thumb.selected} aria-label={thumb.id}>
                                <svg width="48" height="36" viewBox="1 1 48 36">{thumb.art}</svg>
                            </Thumb>
                        ))}
                    </ThumbGrid>
                    <Hint>水平棒グラフの場合、次を試してくだ<br />さい。</Hint>
                    <HintRow>0 個以上の<Pill $small>ディメンション</Pill></HintRow>
                    <HintRow>1 個以上の<Pill $small $measure>メジャー</Pill></HintRow>
                </ShowMeBody>
            </ShowMe>
        </Window>
    )
}

export default App;
